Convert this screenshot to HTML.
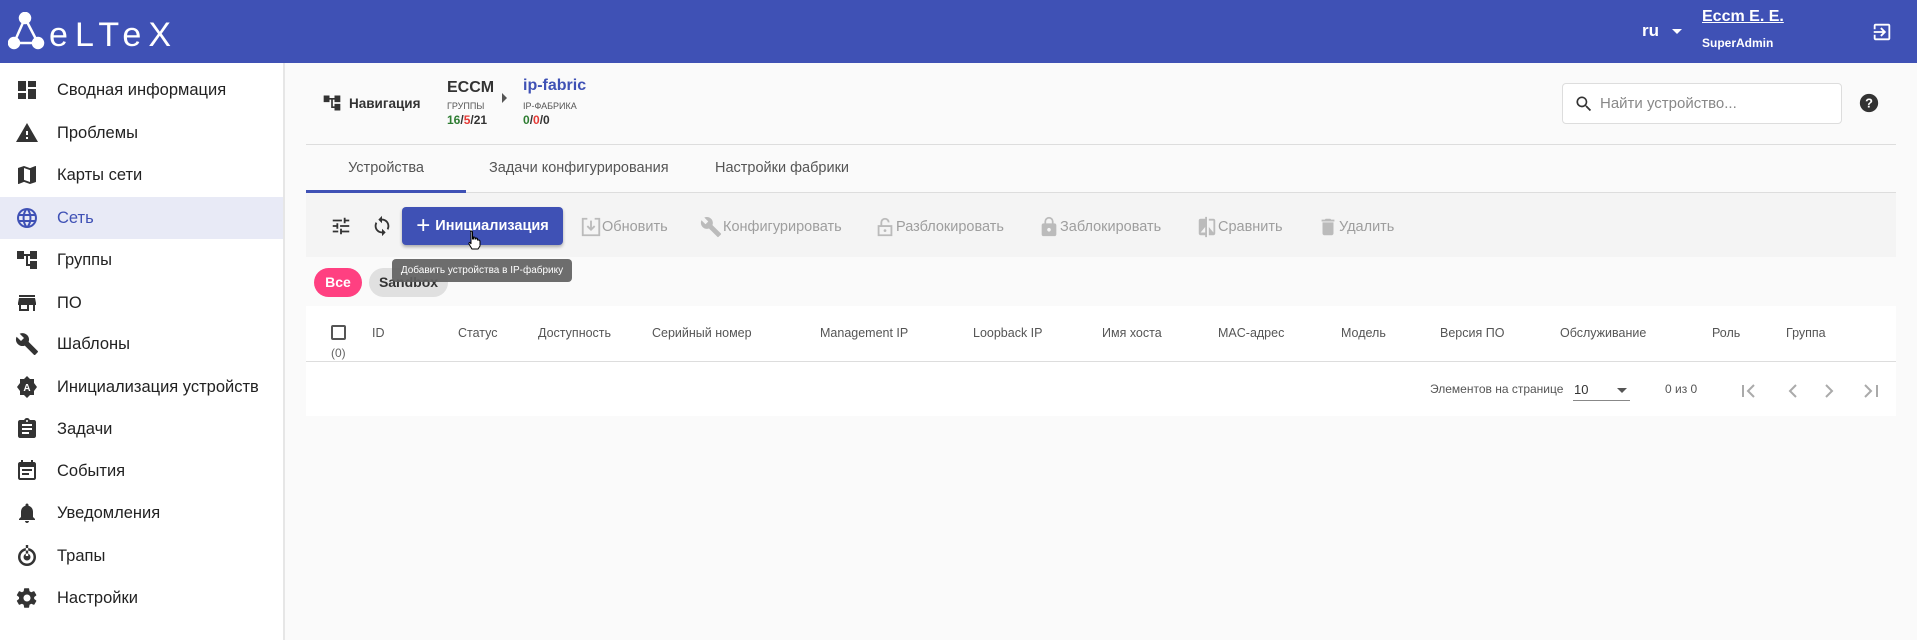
<!DOCTYPE html>
<html><head><meta charset="utf-8"><style>
*{box-sizing:border-box;margin:0;padding:0}
body{width:1917px;height:640px;overflow:hidden;background:#fafafa;font-family:"Liberation Sans",Arial,sans-serif;position:relative;color:#333}
.abs{position:absolute}
.hdr{left:0;top:0;width:1917px;height:63px;background:#3f51b5}
.side{left:0;top:63px;width:285px;height:577px;background:#fff;border-right:2px solid #e6e6e6}
.it{position:absolute;left:0;width:283px;height:42px;display:flex;align-items:center;font-size:16.5px;color:#222}
.it svg{position:absolute;left:15px;width:24px;height:24px;fill:#333}
.it span{position:absolute;left:57px}
.it.act{background:#e8eaf6;color:#3f51b5}
.it.act svg{fill:#3f51b5}
.tb{font-size:14.5px;color:#9e9e9e;display:flex;align-items:center}
.th{position:absolute;top:326px;font-size:12.5px;color:#555}
</style></head><body>
<div class="abs hdr"></div>
<svg class="abs" style="left:8px;top:12px" width="165" height="38" viewBox="0 0 165 38">
<g fill="#fff" stroke="#fff" stroke-width="2.5"><circle cx="17" cy="6" r="5"/><circle cx="6" cy="31" r="5"/><circle cx="30" cy="31" r="5"/><line x1="17" y1="6" x2="6" y2="31"/><line x1="6" y1="31" x2="30" y2="31"/><line x1="17" y1="6" x2="30" y2="31"/></g>
<text x="41" y="34" fill="#fff" font-family="Liberation Sans" font-size="34" letter-spacing="3" textLength="125">eLTeX</text></svg>
<div class="abs" style="left:1642px;top:21px;color:#fff;font-size:17px;font-weight:bold">ru</div>
<div class="abs" style="left:1672px;top:29px;width:0;height:0;border-left:5px solid transparent;border-right:5px solid transparent;border-top:5px solid #fff"></div>
<div class="abs" style="left:1702px;top:8px;color:#fff;font-size:16px;font-weight:bold;text-decoration:underline">Eccm E. E.</div>
<div class="abs" style="left:1702px;top:36px;color:#fff;font-size:12px;font-weight:bold">SuperAdmin</div>
<svg class="abs" style="left:1871px;top:21px" width="22" height="22" viewBox="0 0 24 24"><path fill="#fff" d="M10.09 15.59L11.5 17l5-5-5-5-1.410 1.41L12.67 11H3v2h9.67l-2.58 2.59zM19 3H5c-1.11 0-2 .9-2 2v4h2V5h14v14H5v-4H3v4c0 1.1.89 2 2 2h14c1.1 0 2-.9 2-2V5c0-1.1-.9-2-2-2z"/></svg>

<div class="abs side">
<div class="it" style="top:6px"><svg viewBox="0 0 24 24"><path d="M3 13h8V3H3v10zm0 8h8v-6H3v6zm10 0h8V11h-8v10zm0-18v6h8V3h-8z"/></svg><span>Сводная информация</span></div>
<div class="it" style="top:49px"><svg viewBox="0 0 24 24"><path d="M1 21h22L12 2 1 21zm12-3h-2v-2h2v2zm0-4h-2v-4h2v4z"/></svg><span>Проблемы</span></div>
<div class="it" style="top:91px"><svg viewBox="0 0 24 24"><path d="M20.5 3l-.16.03L15 5.1 9 3 3.36 4.9c-.21.07-.36.25-.36.48V20.5c0 .28.22.5.5.5l.16-.03L9 18.9l6 2.1 5.640-1.9c.21-.07.36-.25.36-.48V3.5c0-.28-.22-.5-.5-.5zM15 19l-6-2.11V5l6 2.11V19z"/></svg><span>Карты сети</span></div>
<div class="it act" style="top:134px"><svg viewBox="0 0 24 24"><path d="M12 2a10 10 0 100 20 10 10 0 000-20zm6.9 6h-2.9a15 15 0 00-1.4-3.6A8 8 0 0118.9 8zM12 4c.8 1.2 1.5 2.5 1.9 4h-3.8c.4-1.5 1.1-2.8 1.9-4zM4.3 14a8 8 0 010-4h3.4a16 16 0 000 4H4.3zm.8 2h2.9c.3 1.3.8 2.5 1.4 3.6A8 8 0 015.1 16zM8 8H5.1a8 8 0 014.3-3.6C8.8 5.5 8.3 6.7 8 8zm4 12c-.8-1.2-1.5-2.5-1.9-4h3.8c-.4 1.5-1.1 2.8-1.9 4zm2.3-6H9.7a14 14 0 010-4h4.6a14 14 0 010 4zm.3 5.6c.6-1.1 1.1-2.3 1.4-3.6h2.9a8 8 0 01-4.3 3.6zm1.7-5.6a16 16 0 000-4h3.4a8 8 0 010 4h-3.4z"/></svg><span>Сеть</span></div>
<div class="it" style="top:176px"><svg viewBox="0 0 24 24"><path d="M22 11V3h-7v3H9V3H2v8h7V8h2v10h4v3h7v-8h-7v3h-2V8h2v3z"/></svg><span>Группы</span></div>
<div class="it" style="top:219px"><svg viewBox="0 0 24 24"><path d="M20 4H4v2h16V4zm1 10v-2l-1-5H4l-1 5v2h1v6h10v-6h4v6h2v-6h1zm-9 4H6v-4h6v4z"/></svg><span>ПО</span></div>
<div class="it" style="top:260px"><svg viewBox="0 0 24 24"><path d="M22.7 19l-9.1-9.1c.9-2.3.4-5-1.5-6.9-2-2-5-2.4-7.4-1.3L9 6 6 9 1.6 4.7C.4 7.1.9 10.1 2.9 12.1c1.9 1.9 4.6 2.4 6.9 1.5l9.1 9.1c.4.4 1 .4 1.4 0l2.3-2.3c.5-.4.5-1.1.1-1.4z"/></svg><span>Шаблоны</span></div>
<div class="it" style="top:303px"><svg viewBox="0 0 24 24"><path d="M12 1l3 3h4v4l3 4-3 4v4h-4l-3 3-3-3H5v-4l-3-4 3-4V4h4z"/><text x="12" y="16" font-size="10" font-weight="bold" fill="#fff" text-anchor="middle" font-family="Liberation Sans">A</text></svg><span>Инициализация устройств</span></div>
<div class="it" style="top:345px"><svg viewBox="0 0 24 24"><path d="M19 3h-4.2C14.4 1.8 13.3 1 12 1s-2.4.8-2.8 2H5c-1.1 0-2 .9-2 2v14c0 1.1.9 2 2 2h14c1.1 0 2-.9 2-2V5c0-1.1-.9-2-2-2zm-7 0c.6 0 1 .4 1 1s-.4 1-1 1-1-.4-1-1 .4-1 1-1zm2 14H7v-2h7v2zm3-4H7v-2h10v2zm0-4H7V7h10v2z"/></svg><span>Задачи</span></div>
<div class="it" style="top:387px"><svg viewBox="0 0 24 24"><path d="M16 1v2H8V1H6v2H5c-1.1 0-2 .9-2 2v14c0 1.1.9 2 2 2h14c1.1 0 2-.9 2-2V5c0-1.1-.9-2-2-2h-1V1h-2zm3 18H5V8h14v11zM7 10h10v2H7zm0 4h7v2H7z"/></svg><span>События</span></div>
<div class="it" style="top:429px"><svg viewBox="0 0 24 24"><path d="M12 22c1.1 0 2-.9 2-2h-4c0 1.1.9 2 2 2zm6-6v-5c0-3.1-1.6-5.6-4.5-6.3V4c0-.8-.7-1.5-1.5-1.5s-1.5.7-1.5 1.5v.7C7.6 5.4 6 7.9 6 11v5l-2 2v1h16v-1l-2-2z"/></svg><span>Уведомления</span></div>
<div class="it" style="top:472px"><svg viewBox="0 0 24 24"><path d="M12 4a9 9 0 100 18 9 9 0 000-18zm0 15.5a6.5 6.5 0 110-13 6.5 6.5 0 010 13zm0-10a3.5 3.5 0 100 7 3.5 3.5 0 000-7zM10.8 1h2.4v11h-2.4z"/></svg><span>Трапы</span></div>
<div class="it" style="top:514px"><svg viewBox="0 0 24 24"><path d="M19.1 12.9c0-.3.1-.6.1-.9s0-.6-.1-.9l2.1-1.6c.2-.1.2-.4.1-.6l-2-3.5c-.1-.2-.4-.3-.6-.2l-2.5 1c-.5-.4-1.1-.7-1.7-1l-.4-2.6c0-.2-.2-.4-.5-.4h-4c-.2 0-.4.2-.5.4l-.4 2.6c-.6.3-1.2.6-1.7 1l-2.5-1c-.2-.1-.5 0-.6.2l-2 3.5c-.1.2-.1.5.1.6l2.1 1.6c0 .3-.1.6-.1.9s0 .6.1.9l-2.1 1.6c-.2.2-.2.4-.1.6l2 3.5c.1.2.4.3.6.2l2.5-1c.5.4 1.1.7 1.7 1l.4 2.6c0 .2.2.4.5.4h4c.2 0 .4-.2.5-.4l.4-2.6c.6-.3 1.2-.6 1.7-1l2.5 1c.2.1.5 0 .6-.2l2-3.5c.1-.2.1-.5-.1-.6l-2.1-1.6zM12 15.5c-1.9 0-3.5-1.6-3.5-3.5s1.6-3.5 3.5-3.5 3.5 1.6 3.5 3.5-1.6 3.5-3.5 3.5z"/></svg><span>Настройки</span></div>
</div>

<!-- nav -->
<svg class="abs" style="left:322px;top:93px" width="20" height="20" viewBox="0 0 24 24"><path fill="#333" d="M22 11V3h-7v3H9V3H2v8h7V8h2v10h4v3h7v-8h-7v3h-2V8h2v3z"/></svg>
<div class="abs" style="left:349px;top:96px;font-size:13.5px;font-weight:bold;color:#333">Навигация</div>
<div class="abs" style="left:447px;top:79px;font-size:16px;font-weight:bold;color:#333">ECCM</div>
<div class="abs" style="left:447px;top:101px;font-size:9px;color:#555">ГРУППЫ</div>
<div class="abs" style="left:447px;top:113px;font-size:12px;font-weight:bold;color:#333"><span style="color:#2e7d32">16</span>/<span style="color:#e53935">5</span>/21</div>
<div class="abs" style="left:502px;top:93px;width:0;height:0;border-top:5px solid transparent;border-bottom:5px solid transparent;border-left:5px solid #555"></div>
<div class="abs" style="left:523px;top:77px;font-size:16px;font-weight:bold;color:#3f51b5">ip-fabric</div>
<div class="abs" style="left:523px;top:101px;font-size:9px;color:#555">IP-ФАБРИКА</div>
<div class="abs" style="left:523px;top:113px;font-size:12px;font-weight:bold;color:#333"><span style="color:#2e7d32">0</span>/<span style="color:#e53935">0</span>/0</div>
<div class="abs" style="left:1562px;top:83px;width:280px;height:41px;border:1px solid #ddd;border-radius:4px;background:#fff"></div>
<svg class="abs" style="left:1574px;top:94px" width="20" height="20" viewBox="0 0 24 24"><path fill="#333" d="M15.5 14h-.8l-.3-.3A6.5 6.5 0 109.5 16c1.6 0 3.1-.6 4.2-1.6l.3.3v.8l5 5 1.5-1.5-5-5zm-6 0C7 14 5 12 5 9.5S7 5 9.5 5 14 7 14 9.5 12 14 9.5 14z"/></svg>
<div class="abs" style="left:1600px;top:95px;font-size:15px;color:#888">Найти устройство...</div>
<svg class="abs" style="left:1858px;top:92px" width="22" height="22" viewBox="0 0 24 24"><circle cx="12" cy="12" r="10" fill="#333"/><text x="12" y="17" font-size="14" font-weight="bold" fill="#fff" text-anchor="middle" font-family="Liberation Sans">?</text></svg>
<div class="abs" style="left:306px;top:144px;width:1590px;height:1px;background:#ddd"></div>

<!-- tabs -->
<div class="abs" style="left:306px;top:160px;width:160px;text-align:center;font-size:14.5px;color:#555">Устройства</div>
<div class="abs" style="left:489px;top:160px;font-size:14.5px;color:#555">Задачи конфигурирования</div>
<div class="abs" style="left:715px;top:160px;font-size:14.5px;color:#555">Настройки фабрики</div>
<div class="abs" style="left:306px;top:192px;width:1590px;height:1px;background:#ddd"></div>
<div class="abs" style="left:306px;top:190px;width:160px;height:3px;background:#3f51b5"></div>

<!-- toolbar -->
<div class="abs" style="left:306px;top:193px;width:1590px;height:64px;background:#f4f4f4"></div>
<svg class="abs" style="left:330px;top:215px" width="22" height="22" viewBox="0 0 24 24"><path fill="#333" d="M3 17v2h6v-2H3zM3 5v2h10V5H3zm10 16v-2h8v-2h-8v-2h-2v6h2zM7 9v2H3v2h4v2h2V9H7zm14 4v-2H11v2h10zm-6-4h2V7h4V5h-4V3h-2v6z"/></svg>
<svg class="abs" style="left:371px;top:215px" width="22" height="22" viewBox="0 0 24 24"><path fill="#333" d="M12 4V1L8 5l4 4V6c3.3 0 6 2.7 6 6 0 1-.3 2-.7 2.8l1.5 1.5C19.5 15 20 13.6 20 12c0-4.4-3.6-8-8-8zm0 14c-3.3 0-6-2.7-6-6 0-1 .3-2 .7-2.8L5.2 7.7C4.5 9 4 10.4 4 12c0 4.4 3.6 8 8 8v3l4-4-4-4v3z"/></svg>
<div class="abs" style="left:402px;top:207px;width:161px;height:38px;background:#3f51b5;border-radius:4px;box-shadow:0 2px 3px rgba(0,0,0,.3);color:#fff;font-size:14.5px;font-weight:bold;display:flex;align-items:center;justify-content:center"><span style="font-size:24px;font-weight:normal;margin-right:5px;line-height:1">+</span>Инициализация</div>
<div class="abs tb" style="left:580px;top:216px"><svg width="22" height="22" viewBox="0 0 24 24"><path fill="none" stroke="#bbb" stroke-width="2" d="M8 3H3v18h18V3h-5M12 5v10M8 11l4 4 4-4"/></svg>Обновить</div>
<div class="abs tb" style="left:699px;top:216px"><svg width="24" height="22" viewBox="0 0 24 24"><path fill="#bbb" d="M22.7 19l-9.1-9.1c.9-2.3.4-5-1.5-6.9-2-2-5-2.4-7.4-1.3L9 6 6 9 1.6 4.7C.4 7.1.9 10.1 2.9 12.1c1.9 1.9 4.6 2.4 6.9 1.5l9.1 9.1c.4.4 1 .4 1.4 0l2.3-2.3c.5-.4.5-1.1.1-1.4z"/></svg>Конфигурировать</div>
<div class="abs tb" style="left:874px;top:216px"><svg width="22" height="22" viewBox="0 0 24 24"><path fill="none" stroke="#bbb" stroke-width="2" d="M5 11h14v10H5zM8 11V7a4 4 0 018 0"/><circle cx="12" cy="16" r="1.5" fill="#bbb"/></svg>Разблокировать</div>
<div class="abs tb" style="left:1038px;top:216px"><svg width="22" height="22" viewBox="0 0 24 24"><path fill="#bbb" d="M18 8h-1V6A5 5 0 007 6v2H6c-1.1 0-2 .9-2 2v10c0 1.1.9 2 2 2h12c1.1 0 2-.9 2-2V10c0-1.1-.9-2-2-2zm-6 9c-1.1 0-2-.9-2-2s.9-2 2-2 2 .9 2 2-.9 2-2 2zm3.1-9H8.9V6a3.1 3.1 0 016.2 0v2z"/></svg>Заблокировать</div>
<div class="abs tb" style="left:1196px;top:216px"><svg width="22" height="22" viewBox="0 0 24 24"><path fill="#bbb" d="M10 3H5c-1.1 0-2 .9-2 2v14c0 1.1.9 2 2 2h5v2h2V1h-2v2zm0 15H5l5-6v6zm9-15h-5v2h5v13l-5-6v9h5c1.1 0 2-.9 2-2V5c0-1.1-.9-2-2-2z"/></svg>Сравнить</div>
<div class="abs tb" style="left:1317px;top:216px"><svg width="22" height="22" viewBox="0 0 24 24"><path fill="#bbb" d="M6 19c0 1.1.9 2 2 2h8c1.1 0 2-.9 2-2V7H6v12zM19 4h-3.5l-1-1h-5l-1 1H5v2h14V4z"/></svg>Удалить</div>

<!-- chips -->
<div class="abs" style="left:314px;top:268px;width:48px;height:29px;border-radius:15px;background:#ff4081;color:#fff;font-size:14px;font-weight:bold;text-align:center;line-height:29px">Все</div>
<div class="abs" style="left:369px;top:268px;width:79px;height:29px;border-radius:15px;background:#e0e0e0;color:#333;font-size:14px;font-weight:bold;text-align:center;line-height:29px">Sandbox</div>
<div class="abs" style="left:392px;top:259px;width:180px;height:23px;border-radius:4px;background:rgba(97,97,97,.92);color:#fff;font-size:10px;line-height:23px;text-align:center;white-space:nowrap">Добавить устройства в IP-фабрику</div>

<!-- table -->
<div class="abs" style="left:306px;top:306px;width:1590px;height:110px;background:#fff"></div>
<div class="abs" style="left:331px;top:325px;width:15px;height:15px;border:2px solid #555;border-radius:2px"></div>
<div class="abs" style="left:331px;top:346px;font-size:12px;color:#666">(0)</div>
<div class="th" style="left:372px">ID</div>
<div class="th" style="left:458px">Статус</div>
<div class="th" style="left:538px">Доступность</div>
<div class="th" style="left:652px">Серийный номер</div>
<div class="th" style="left:820px">Management IP</div>
<div class="th" style="left:973px">Loopback IP</div>
<div class="th" style="left:1102px">Имя хоста</div>
<div class="th" style="left:1218px">MAC-адрес</div>
<div class="th" style="left:1341px">Модель</div>
<div class="th" style="left:1440px">Версия ПО</div>
<div class="th" style="left:1560px">Обслуживание</div>
<div class="th" style="left:1712px">Роль</div>
<div class="th" style="left:1786px">Группа</div>
<div class="abs" style="left:306px;top:361px;width:1590px;height:1px;background:#ddd"></div>
<div class="abs" style="left:1430px;top:382px;font-size:12px;color:#555">Элементов на странице</div>
<div class="abs" style="left:1574px;top:382px;font-size:13px;color:#333">10</div>
<div class="abs" style="left:1617px;top:388px;width:0;height:0;border-left:5px solid transparent;border-right:5px solid transparent;border-top:5px solid #555"></div>
<div class="abs" style="left:1573px;top:400px;width:57px;height:1px;background:#888"></div>
<div class="abs" style="left:1665px;top:382px;font-size:12px;color:#555">0 из 0</div>
<svg class="abs" style="left:1738px;top:379px" width="144" height="24" viewBox="0 0 144 24"><g fill="none" stroke="#aaa" stroke-width="2"><path d="M5 6v12M16 6l-6 6 6 6"/><path d="M58 6l-6 6 6 6"/><path d="M88 6l6 6-6 6"/><path d="M127 6l6 6-6 6M139 6v12"/></g></svg>
<svg class="abs" style="left:466px;top:230px" width="18" height="20" viewBox="0 0 18 20"><path d="M5 1c1 0 1.5.7 1.5 1.5V9h1V7c1 0 1.5.5 1.5 1v1h1V8c1 0 1.5.5 1.5 1v1h1c1 0 1.5.5 1.5 1.5V16l-2 3H6l-3-5c-.5-1 .5-2 1.5-1l.5 1V2.5C5 1.7 4 1 5 1z" fill="#fff" stroke="#000" stroke-width="1"/></svg>
</body></html>
